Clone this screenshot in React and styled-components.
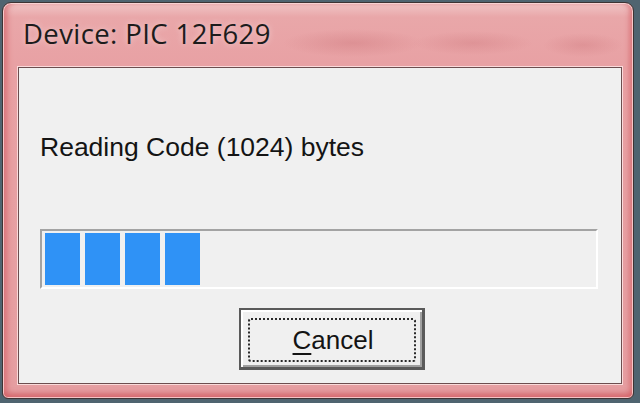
import React from 'react'
import styled, { createGlobalStyle } from 'styled-components'

const GlobalStyle = createGlobalStyle`
  html, body {
    margin: 0;
    padding: 0;
    background: #4f6470;
    width: 640px;
    height: 403px;
    overflow: hidden;
  }
  body {
    font-family: "Liberation Sans", Arial, sans-serif;
  }
`

function ProgressDialog({ device, bytes, blocks }) {
  return (
    <Window>
      <TitleBar>
        <Title>Device: {device}</Title>
      </TitleBar>
      <Client>
        <Message>Reading Code ({bytes}) bytes</Message>
        <Progress>
          {Array.from({ length: blocks }).map((_, i) => (
            <Block key={i} />
          ))}
        </Progress>
        <ButtonRow>
          <Button>
            <Focus>
              <u>C</u>ancel
            </Focus>
          </Button>
        </ButtonRow>
      </Client>
    </Window>
  )
}

export default function App() {
  return (
    <>
      <GlobalStyle />
      <Page>
        <ProgressDialog device="PIC 12F629" bytes={1024} blocks={4} />
      </Page>
    </>
  )
}

const Page = styled.div`
  padding: 2px 0 0 2px;
  width: 640px;
  height: 403px;
  box-sizing: border-box;
`

const Window = styled.div`
  width: 632px;
  height: 397px;
  box-sizing: border-box;
  display: flex;
  flex-direction: column;
  border: 1px solid #3e3434;
  border-radius: 9px 9px 6px 6px;
  padding: 0 11px 14px 15px;
  background:
    radial-gradient(ellipse 70px 14px at 350px 40px, rgba(200, 110, 115, 0.35), transparent),
    radial-gradient(ellipse 60px 12px at 470px 40px, rgba(200, 110, 115, 0.3), transparent),
    radial-gradient(ellipse 40px 12px at 580px 42px, rgba(200, 110, 115, 0.3), transparent),
    linear-gradient(180deg, #f1c6c7 0px, #e9a7a9 14px, #e8a1a4 60px, #e59ea1 100%);
  box-shadow:
    inset 0 0 0 1px rgba(255, 225, 225, 0.75),
    inset 0 -6px 5px -1px rgba(212, 96, 102, 0.75),
    inset 6px 0 5px -1px rgba(212, 96, 102, 0.55),
    inset -5px 0 5px -1px rgba(212, 96, 102, 0.55);
`

const TitleBar = styled.div`
  height: 64px;
  flex: none;
  display: flex;
  align-items: flex-start;
  padding: 13px 0 0 5px;
  box-sizing: border-box;
`

const Title = styled.div`
  font-family: "Open Sans", "Liberation Sans", sans-serif;
  font-size: 27.5px;
  line-height: 36px;
  color: #1c1c1c;
  text-shadow: 0 0 6px rgba(255, 240, 240, 0.6);
  letter-spacing: 0.4px;
`

const Client = styled.div`
  flex: 1;
  display: flex;
  flex-direction: column;
  background: #f0f0f0;
  border: 1px solid #6c4e4f;
  box-shadow: 0 0 0 1px rgba(255, 232, 232, 0.8);
  padding: 63px 23px 0 21px;
`

const Message = styled.div`
  font-size: 26.5px;
  line-height: 32px;
  color: #141414;
`

const Progress = styled.div`
  margin-top: 66px;
  height: 60px;
  box-sizing: border-box;
  display: flex;
  gap: 5px;
  padding: 2px 3px 2px 3px;
  border-top: 2px solid #a3a3a3;
  border-left: 2px solid #a3a3a3;
  border-bottom: 2px solid #ffffff;
  border-right: 2px solid #ffffff;
  background: #f0f0f0;
`

const Block = styled.div`
  width: 35px;
  height: 100%;
  background: #2f92f6;
`

const ButtonRow = styled.div`
  display: flex;
  margin-top: 19px;
  padding-left: 199px;
`

const Button = styled.div`
  width: 186px;
  height: 62px;
  box-sizing: border-box;
  background: #f0f0f0;
  border: 2px solid #5a5a5a;
  border-right-width: 3px;
  border-bottom-width: 3px;
  box-shadow:
    inset 2px 2px 0 #ffffff,
    inset -2px -2px 0 #a0a0a0;
  padding: 8px 6px 5px 7px;
  display: flex;
`

const Focus = styled.div`
  flex: 1;
  border: 2px dotted #2a2a2a;
  border-radius: 3px;
  display: flex;
  align-items: center;
  justify-content: center;
  font-size: 26px;
  color: #141414;
  padding-left: 2px;

  u {
    text-decoration-thickness: 2px;
    text-underline-offset: 4px;
  }
`
